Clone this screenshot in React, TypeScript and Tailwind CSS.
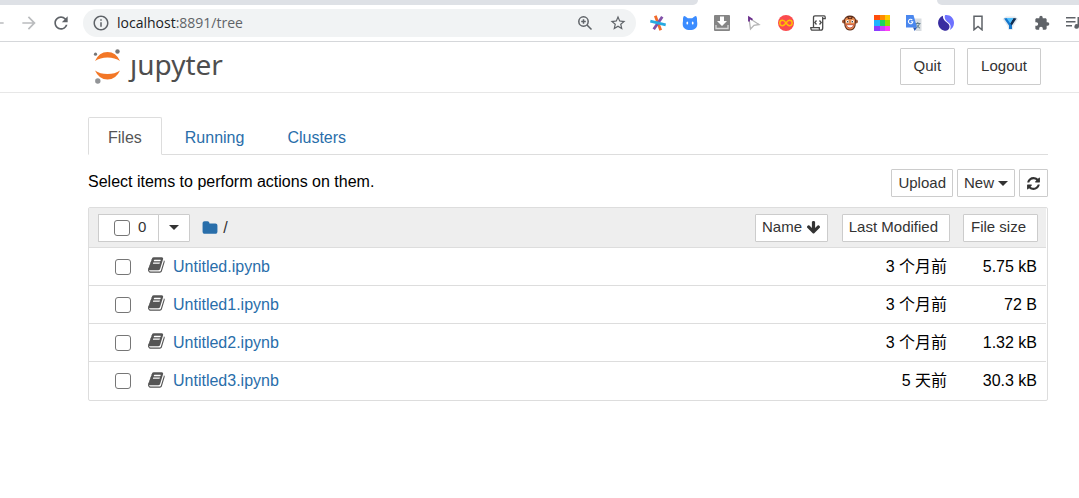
import type { ReactNode } from "react";
import { MdExtension, MdRefresh, MdStarBorder, MdInfoOutline, MdArrowBack, MdArrowForward } from "react-icons/md";

const files = [
  { name: "Untitled.ipynb", modified: "3 个月前", size: "5.75 kB" },
  { name: "Untitled1.ipynb", modified: "3 个月前", size: "72 B" },
  { name: "Untitled2.ipynb", modified: "3 个月前", size: "1.32 kB" },
  { name: "Untitled3.ipynb", modified: "5 天前", size: "30.3 kB" },
];

const tabs = [
  { label: "Files", active: true },
  { label: "Running", active: false },
  { label: "Clusters", active: false },
];

const glyphs = {
  book: "M1639 478q40 57 18 129l-275 906q-19 64-76.500 107.500t-122.500 43.500h-923q-77 0-148.500-53.500t-99.500-131.500q-24-67-2-127 0-4 3-27t4-37q1-8-3-21.500t-3-19.500q2-11 8-21t16.500-23.500 16.500-23.500q23-38 45-91.500t30-91.500q3-10 .5-30t-.5-28q3-11 17-28t17-23q21-36 42-92t25-90q1-9-2.500-32t.5-28q4-13 22-30.500t22-22.500q19-26 42.500-84.500t27.500-96.500q1-8-3-25.500t-2-26.500q2-8 9-18t18-23 17-21q8-12 16.500-30.500t15-35 16-36 19.500-32 26.500-23.500 36-11.500 47.500 5.500l-1 3q38-9 51-9h761q74 0 114 56t18 130l-274 906q-36 119-71.500 153.500t-128.500 34.500h-869q-27 0-38 15-11 16-1 43 24 70 144 70h923q29 0 56-15.500t35-41.500l300-987q7-22 5-57 38 15 59 43zm-1064 2q-4 13 2 22.500t20 9.500h608q13 0 25.500-9.500t16.500-22.500l21-64q4-13-2-22.500t-20-9.500h-608q-13 0-25.500 9.500t-16.500 22.500zm-83 256q-4 13 2 22.500t20 9.500h608q13 0 25.500-9.500t16.500-22.500l21-64q4-13-2-22.500t-20-9.500h-608q-13 0-25.500 9.500t-16.500 22.500z",
  refresh: "M1639 1056q0 5-1 7-64 268-268 434.500t-478 166.500q-146 0-282.500-55t-243.500-157l-129 129q-19 19-45 19t-45-19-19-45v-448q0-26 19-45t45-19h448q26 0 45 19t19 45-19 45l-137 137q71 66 161 102t187 36q134 0 250-65t186-179q11-17 53-117 8-23 30-23h192q13 0 22.500 9.500t9.500 22.500zm25-800v448q0 26-19 45t-45 19h-448q-26 0-45-19t-19-45 19-45l138-138q-148-137-349-137-134 0-250 65t-186 179q-11 17-53 117-8 23-30 23h-199q-13 0-22.500-9.500t-9.500-22.500v-7q65-268 270-434.500t480-166.500q146 0 284 55.500t245 156.500l130-129q19-19 45-19t45 19 19 45z",
  arrowDown: "M1675 832q0 53-37 90l-651 652q-39 37-91 37-53 0-90-37l-651-652q-38-36-38-90 0-53 38-91l74-75q39-37 91-37 53 0 90 37l294 294v-704q0-52 38-90t90-38h128q52 0 90 38t38 90v704l294-294q37-37 90-37 52 0 91 37l75 75q37 39 37 91z",
  folder: "M1728 608v704q0 92-66 158t-158 66h-1216q-92 0-158-66t-66-158v-960q0-92 66-158t158-66h320q92 0 158 66t66 158v32h672q92 0 158 66t66 158z",
};

function Glyph({ name, className }: { name: keyof typeof glyphs; className: string }) {
  return (
    <svg viewBox="0 0 1792 1792" fill="currentColor" className={className} aria-hidden="true">
      <path d={glyphs[name]} />
    </svg>
  );
}

function Caret() {
  return <span className="inline-block border-x-5 border-t-5 border-x-transparent border-t-[#333]" />;
}

function SmallButton({ children, label, className = "px-[7px]" }: { children: ReactNode; label?: string; className?: string }) {
  return (
    <button
      type="button"
      aria-label={label}
      className={`inline-flex h-7 items-center rounded-[1px] border border-[#ccc] bg-white text-[15px] font-normal text-[#333] hover:bg-[#e6e6e6] ${className}`}
    >
      {children}
    </button>
  );
}

function Checkbox({ label }: { label: string }) {
  return (
    <input
      type="checkbox"
      aria-label={label}
      className="size-4 shrink-0 appearance-none rounded-[3px] border border-[#767676] bg-white checked:bg-[#296eaa]"
    />
  );
}

const extensions: { name: string; icon: ReactNode }[] = [
  {
    name: "Asterisk",
    icon: (
      <g strokeWidth="2.8" strokeLinecap="butt">
        <path d="M5.300 .8l5.400 14.400" stroke="#f26b2b" />
        <path d="M12.300 1.700l-8.600 12.600" stroke="#8150a8" />
        <path d="M.3 6.200l15.400 3.600" stroke="#27a9e1" />
      </g>
    ),
  },
  {
    name: "Cat",
    icon: (
      <>
        <path d="M1.500 1.500q.8-.8 2 0l2.300 1.800h4.400l2.300-1.800q1.200-.8 2 0 .7 1 .5 4.500.3 1.500.3 3c0 4-3 6-7.300 6s-7.300-2-7.300-6q0-1.500.3-3Q.8 2.500 1.500 1.500z" fill="#3b8cff" />
        <ellipse cx="5.300" cy="8" rx=".9" ry="1.500" fill="#fff" />
        <ellipse cx="10.700" cy="8" rx=".9" ry="1.500" fill="#fff" />
      </>
    ),
  },
  {
    name: "Downloader",
    icon: (
      <>
        <rect width="16" height="16" rx="1" fill="#858585" />
        <path d="M6 1.500h4V6h3l-5 5-5-5h3z" fill="#fff" />
        <path d="M2 10v3.500h12V10" fill="none" stroke="#d8d8d8" strokeWidth="1.300" />
      </>
    ),
  },
  {
    name: "Pointer",
    icon: (
      <g fill="none" strokeWidth="1.300">
        <path d="M3 3l10 6.500-5 .8L4.500 14z" stroke="#b5b5b5" />
        <path d="M3 6.500V2.500l3.500 2.200" stroke="#6a2c8c" strokeWidth="1.800" />
      </g>
    ),
  },
  {
    name: "Infinity",
    icon: (
      <>
        <circle cx="8" cy="8" r="8" fill="#fb4b4e" />
        <path d="M8 8C6.700 6.200 5.800 5.300 4.500 5.300a2.700 2.700 0 000 5.400C5.800 10.700 6.700 9.800 8 8s2.200-2.700 3.500-2.700a2.700 2.700 0 010 5.400C10.200 10.700 9.300 9.800 8 8z" fill="none" stroke="#ffc400" strokeWidth="1.400" />
      </>
    ),
  },
  {
    name: "Scripts",
    icon: (
      <g fill="none" stroke="#4a4a4a" strokeWidth="1.300">
        <path d="M3.500 12V2.500Q3.500.8 5 .8h9.200q1 0 1 1.800v1h-2.500M12.700 2v11q0 2.200-2 2.200H2.500Q.8 15.200.8 12.700h8.500v1q0 1.500 1.400 1.500" />
        <path d="M6.500 5.500l-1.700 2 1.700 2M9.500 5.500l1.700 2-1.700 2" />
      </g>
    ),
  },
  {
    name: "Monkey",
    icon: (
      <>
        <circle cx="2" cy="6.500" r="2" fill="#9c5330" />
        <circle cx="14" cy="6.500" r="2" fill="#9c5330" />
        <path d="M2 5Q3 .5 8 .5T14 5l-.5 6Q12 15.500 8 15.500T2.500 11z" fill="#5b2c1b" />
        <path d="M3 5Q3.500 2 8 2t5 3l-.5 6Q11 14.500 8 14.500T3.500 11z" fill="#e98c50" />
        <path d="M5 1l3 2.500L11 1l-1 3H6z" fill="#5b2c1b" />
        <circle cx="5.500" cy="6.500" r="1.500" fill="#fff" />
        <circle cx="10.500" cy="6.500" r="1.500" fill="#fff" />
        <circle cx="5.700" cy="6.700" r=".7" fill="#222" />
        <circle cx="10.300" cy="6.700" r=".7" fill="#222" />
        <path d="M4.200 9.700h7.600Q11 13 8 13T4.200 9.700z" fill="#fff" stroke="#c2402a" strokeWidth=".8" />
      </>
    ),
  },
  {
    name: "Color tiles",
    icon: (
      <>
        <path d="M0 0h6v5H0z" fill="#ff4d0a" />
        <path d="M6 0h5v5H6z" fill="#ff8a00" />
        <path d="M11 0h5v5h-5z" fill="#ffc800" />
        <path d="M0 5h6v6H0z" fill="#1eb4ff" />
        <path d="M6 5h5v6H6z" fill="#19d562" />
        <path d="M11 5h5v6h-5z" fill="#8be000" />
        <path d="M0 11h6v5H0z" fill="#8c3cff" />
        <path d="M6 11h5v5H6z" fill="#c742ff" />
        <path d="M11 11h5v5h-5z" fill="#ff40f5" />
      </>
    ),
  },
  {
    name: "Translate",
    icon: (
      <>
        <path d="M6 3.500h9.500V16H10z" fill="#d9dde1" />
        <path d="M9 8.500h5.500M11.800 7v1.500M13.500 8.500q-.8 3-3 4.500M10.500 9.500q1 2.500 3.500 3.700" fill="none" stroke="#62818f" />
        <path d="M0 0h7.500L11 12.500H0z" fill="#4a87ee" />
        <path d="M7 12.500h4L8.700 16z" fill="#2859b8" />
        <path d="M6.300 5.100A2.200 2.200 0 106.800 6.800H4.800" fill="none" stroke="#fff" strokeWidth="1.100" />
      </>
    ),
  },
  {
    name: "Swirl",
    icon: (
      <>
        <path d="M5 .8C1.800 2-.2 5 .1 8.500c.5 4.500 4 7.300 7.900 7.300 3.500-.8 4.500-4.300 2.500-6.800C8.500 6.800 4.500 5.500 5 .8z" fill="#382ca0" />
        <path d="M7 .2c5-.8 9 3 9 7.800 0 3-1.700 5.800-4.200 7 1.700-3.500.7-6-1.600-7.600C7.500 5.500 6 3 7 .2z" fill="#6e72ff" />
      </>
    ),
  },
  { name: "Bookmark", icon: <path d="M4 1.200h8v13.600l-4-3.300-4 3.300z" fill="none" stroke="#5f6368" strokeWidth="1.500" /> },
  {
    name: "Y helper",
    icon: (
      <>
        <path d="M.5 4L4 1.500h9L16 4l-4.500 7-1 4h-4l-1-4z" fill="#e1e8ee" />
        <path d="M2 3.500L5 3l5 6.500V14H7v-3.500z" fill="#1476cc" />
        <path d="M14.500 3.500L11.500 3 8 8l1.800 2.500z" fill="#102c50" />
        <path d="M4.500 3h7L8.300 8.500z" fill="#4fc0ff" />
      </>
    ),
  },
];

function BrowserBar() {
  return (
    <div className="border-b border-[#d5d7da] bg-white">
      <div className="flex h-[5px] bg-white">
        <div className="grow rounded-br-lg bg-[#dee1e6]" />
        <div className="w-[239px]" />
        <div className="w-[142px] rounded-bl-lg bg-[#dee1e6]" />
      </div>
      <div className="flex h-9 items-center text-[#5f6368]">
        <button type="button" aria-label="Back" className="flex w-[7px] justify-end overflow-hidden text-[#babcbe]">
          <MdArrowBack size={20} className="shrink-0" />
        </button>
        <button type="button" aria-label="Forward" className="ml-3 text-[#babcbe]">
          <MdArrowForward size={20} />
        </button>
        <button type="button" aria-label="Reload" className="ml-3">
          <MdRefresh size={20} />
        </button>
        <div className="ml-3 flex h-7 grow items-center rounded-full bg-[#f1f3f4] pr-[9px] pl-[9px]">
          <MdInfoOutline size={18} />
          <span className="ml-[7px] grow font-['Open_Sans',sans-serif] text-sm">
            <span className="text-[#202124]">localhost</span>:8891/tree
          </span>
          <button type="button" aria-label="Zoom">
            <svg viewBox="0 0 16 16" fill="none" stroke="currentColor" strokeWidth="1.500" className="size-4">
              <circle cx="6.500" cy="6.500" r="4.700" />
              <path d="M10 10l4.500 4.500M4.200 6.500h4.600M6.500 4.200v4.600" />
            </svg>
          </button>
          <button type="button" aria-label="Bookmark this page" className="ml-4">
            <MdStarBorder size={18} />
          </button>
        </div>
        <div className="ml-[14px] flex shrink-0 items-center gap-4">
          {extensions.map((ext) => (
            <button key={ext.name} type="button" aria-label={ext.name}>
              <svg viewBox="0 0 16 16" className="size-4">
                {ext.icon}
              </svg>
            </button>
          ))}
          <button type="button" aria-label="Extensions">
            <MdExtension size={16} />
          </button>
          <button type="button" aria-label="Media" className="w-[13px] overflow-hidden">
            <svg viewBox="0 0 13 16" fill="currentColor" className="h-4 w-[13px]">
              <path d="M0 2h9.500v1.500H0zM0 6h9.500v1.500H0zM0 10h6v1.500H0zM11.500 2H13v9.500a2.300 2.300 0 11-1.500-2.200z" />
            </svg>
          </button>
        </div>
      </div>
    </div>
  );
}

function Logo() {
  return (
    <a href="/tree" aria-label="jupyter" className="flex items-start gap-[9px] pl-1">
      <svg viewBox="0 0 28 36" className="h-9 w-7">
        <path d="M2 13Q6 4 14.500 4T27 13Q22 9.500 14.500 9.500T2 13z" fill="#f37726" />
        <path d="M2 22.500Q6 31.500 14.500 31.500T27 22.500Q22 26 14.500 26T2 22.500z" fill="#f37726" />
        <circle cx="24.500" cy="3.500" r="2.200" fill="#767677" />
        <circle cx="2.500" cy="6.200" r="1.600" fill="#767677" />
        <circle cx="4.800" cy="33" r="2.700" fill="#929497" />
      </svg>
      <span className="font-['Noto_Sans',sans-serif] text-[28px] leading-8 text-[#4e4e4e]">ȷupyter</span>
    </a>
  );
}

export default function App() {
  return (
    <div className="min-h-screen bg-white font-['Liberation_Sans','Noto_Sans_CJK_SC',sans-serif] text-base text-black">
      <BrowserBar />

      <header className="border-b border-[#e7e7e7]">
        <div className="mr-[38px] ml-[89px] flex h-[50px] items-center justify-between pb-[2px]">
          <Logo />
          <div className="flex gap-3">
            {["Quit", "Logout"].map((label) => (
              <button key={label} type="button" className="h-[37px] rounded-[1px] border border-[#ccc] bg-white px-[13px] text-[15px] text-[#333]">
                {label}
              </button>
            ))}
          </div>
        </div>
      </header>

      <main className="mr-[31px] ml-[88px] pt-6">
        <nav className="flex gap-[3px] border-b border-[#ddd]">
          {tabs.map((tab) => (
            <a
              key={tab.label}
              href={`#${tab.label.toLowerCase()}`}
              className={`-mb-px h-[38px] rounded-t-xs border px-[19px] leading-[39px] ${tab.active ? "border-[#ddd] border-b-white bg-white text-[#555]" : "border-transparent text-[#296eaa]"}`}
            >
              {tab.label}
            </a>
          ))}
        </nav>

        <div className="flex items-start justify-between pt-[14px] pb-[10px]">
          <p className="leading-[26px]">Select items to perform actions on them.</p>
          <div className="flex gap-1">
            <SmallButton className="px-[6px]">Upload</SmallButton>
            <SmallButton className="gap-1 px-[6px]">
              New <Caret />
            </SmallButton>
            <SmallButton label="Refresh" className="px-[6px]">
              <Glyph name="refresh" className="size-[15px]" />
            </SmallButton>
          </div>
        </div>

        {/* Notebook list */}
        <div className="rounded-xs border border-[#ddd] pr-px">
          <table className="w-full border-separate border-spacing-0">
            <thead className="bg-[#eee]">
              <tr className="h-10">
                <th className="border-b border-[#ddd] pl-[9px] font-normal">
                  <div className="flex items-center">
                    <label className="flex h-7 items-center gap-2 border border-[#ccc] bg-white pr-3 pl-[15px] text-[15px] text-[#333]">
                      <Checkbox label="Select all" />0
                    </label>
                    <SmallButton label="Select menu" className="-ml-px px-[10px]">
                      <Caret />
                    </SmallButton>
                    <a href="/tree" aria-label="Home" className="ml-3 text-[#296eaa]">
                      <Glyph name="folder" className="size-4" />
                    </a>
                    <span className="ml-[5px] text-[#333]">/</span>
                    <SmallButton className="ml-auto gap-1 px-[6px]">
                      Name <Glyph name="arrowDown" className="size-[15px]" />
                    </SmallButton>
                  </div>
                </th>
                <th className="w-[122px] border-b border-[#ddd] text-right font-normal">
                  <div className="flex justify-end">
                    <SmallButton className="pr-[11px] pl-[6px]">Last Modified</SmallButton>
                  </div>
                </th>
                <th className="w-24 border-b border-[#ddd] pr-2 font-normal">
                  <div className="flex justify-end">
                    <SmallButton className="pr-[11px] pl-[7px]">File size</SmallButton>
                  </div>
                </th>
              </tr>
            </thead>
            <tbody className="[&>tr:last-child>td]:border-b-0">
              {files.map((file) => (
                <tr key={file.name} className="h-[38px]">
                  <td className="border-b border-[#ddd] pl-[26px]">
                    <div className="flex items-center">
                      <Checkbox label={`Select ${file.name}`} />
                      <Glyph name="book" className="mb-[3px] ml-[17px] size-[18px] text-[#555]" />
                      <a href={`/notebooks/${file.name}`} className="ml-[7px] text-[#296eaa]">
                        {file.name}
                      </a>
                    </div>
                  </td>
                  <td className="border-b border-[#ddd] pr-[3px] text-right whitespace-nowrap">{file.modified}</td>
                  <td className="border-b border-[#ddd] pr-[9px] text-right whitespace-nowrap">{file.size}</td>
                </tr>
              ))}
            </tbody>
          </table>
        </div>
      </main>
    </div>
  );
}
